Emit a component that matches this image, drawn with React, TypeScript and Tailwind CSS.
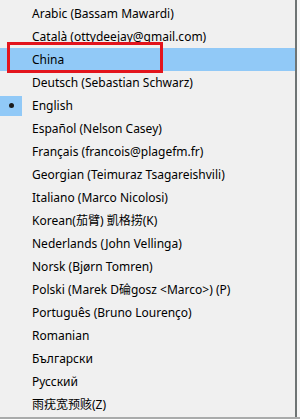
const items = [
  "Arabic (Bassam Mawardi)",
  "Català (ottydeejay@gmail.com)",
  "China",
  "Deutsch (Sebastian Schwarz)",
  "English",
  "Español (Nelson Casey)",
  "Français (francois@plagefm.fr)",
  "Georgian (Teimuraz Tsagareishvili)",
  "Italiano (Marco Nicolosi)",
  "Korean(茄臂) 凱格捞(K)",
  "Nederlands (John Vellinga)",
  "Norsk (Bjørn Tomren)",
  "Polski (Marek D碖gosz <Marco>) (P)",
  "Português (Bruno Lourenço)",
  "Romanian",
  "Български",
  "Русский",
  "雨疣宽预赅(Z)",
];

const hovered = "China";
const checked = "English";

export default function App() {
  return (
    <div className="relative w-[300px] h-[419px] bg-[#f3f3f3] overflow-hidden font-['Noto_Sans','Noto_Sans_CJK_SC',sans-serif] text-[12px] text-[#000]">
      <div className="flex h-[417px]">
        {/* Menu */}
        <div className="w-[295px] bg-[#f0f0f0] pt-[2px] flex flex-col">
          {items.map((label) => (
            <div
              key={label}
              className={`flex items-center h-[23px] ${label === hovered ? "bg-[#91c9f7]" : ""}`}
            >
              <div className="w-[32px] h-full flex items-center">
                {label === checked && (
                  <div className="w-[22px] h-[20px] bg-[#91c9f7] flex items-center justify-center">
                    <div className="size-[5px] rounded-full bg-[#1a1a1a]" />
                  </div>
                )}
              </div>
              <span className="leading-[23px] whitespace-nowrap">{label}</span>
            </div>
          ))}
        </div>
        {/* Right edge */}
        <div className="w-[2px] bg-[#6e7474]" />
        <div className="flex-1 bg-[#f7f7f7]" />
      </div>
      <div className="h-[2px] bg-[#a9abab]" />

      {/* Annotation box */}
      <div className="absolute left-[7px] top-[42px] w-[156px] h-[31px] border-[3px] border-[#e3141c]" />
    </div>
  );
}
